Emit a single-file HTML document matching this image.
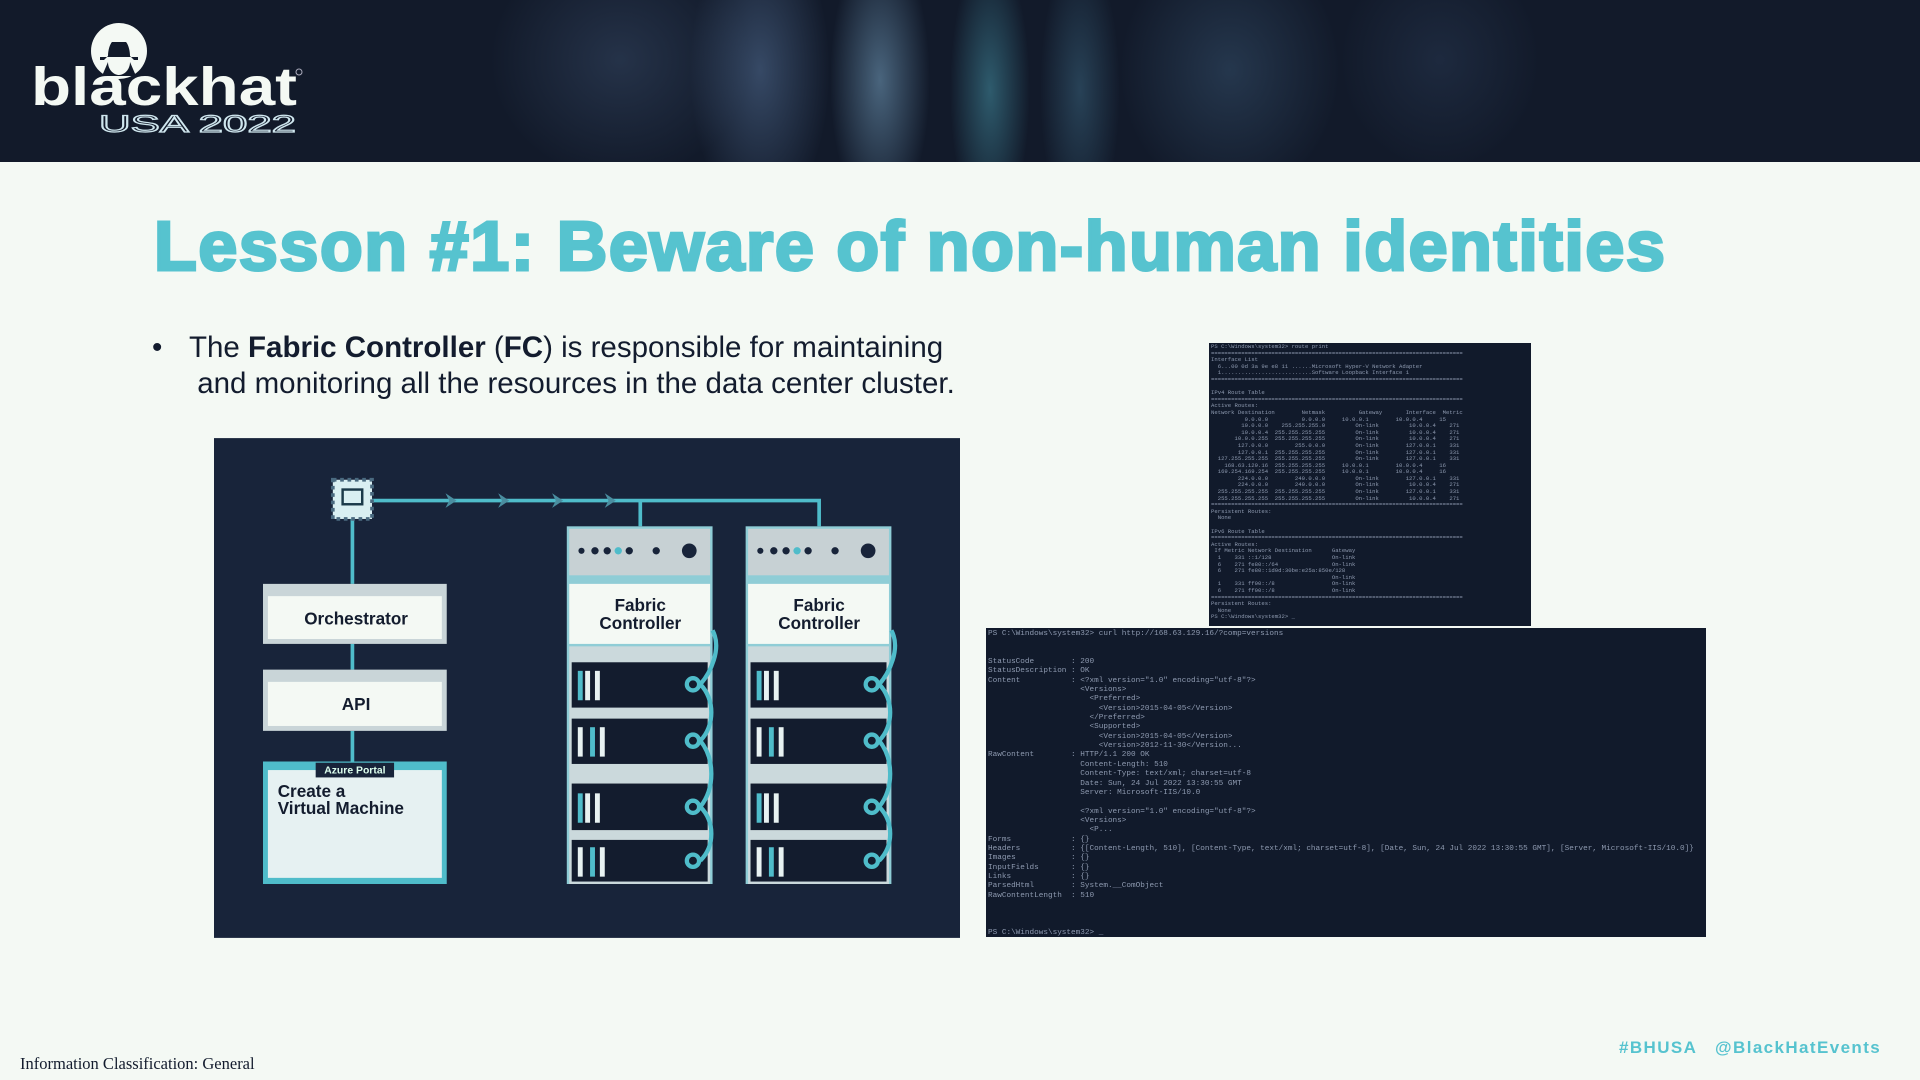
<!DOCTYPE html>
<html><head><meta charset="utf-8"><style>
*{margin:0;padding:0;box-sizing:border-box}
body{width:1920px;height:1080px;background:#f4f9f4;position:relative;overflow:hidden;font-family:"Liberation Sans",sans-serif}
.hdr{position:absolute;left:0;top:0;width:1920px;height:162px;background:
radial-gradient(ellipse 50px 140px at 880px 80px,rgba(110,150,180,.6),transparent),
radial-gradient(ellipse 70px 150px at 760px 70px,rgba(90,120,160,.5),transparent),
radial-gradient(ellipse 40px 140px at 990px 90px,rgba(80,170,190,.45),transparent),
radial-gradient(ellipse 40px 140px at 1080px 90px,rgba(80,140,170,.35),transparent),
radial-gradient(ellipse 110px 130px at 1230px 70px,rgba(60,90,120,.45),transparent),
radial-gradient(ellipse 130px 120px at 620px 60px,rgba(60,80,110,.45),transparent),
radial-gradient(ellipse 100px 110px at 1440px 60px,rgba(50,70,100,.35),transparent),
#121a2a}
.t{position:absolute;white-space:nowrap}
.term{position:absolute;background:#111a2b;font-family:"Liberation Mono",monospace;color:#8e9ab0;white-space:pre;overflow:hidden}
</style></head><body>
<div class="hdr"></div>
<svg style="position:absolute;left:0;top:0" width="400" height="162">
<circle cx="119" cy="51" r="28" fill="#f4f9f4"/>
<path d="M104 60 h30 l-4 -4 c0-6 -2-12 -4-14 h-14 c-2 2 -4 8 -4 14 z M100 57 h38 v3 h-38z M108 62 c0 8 6 13 11 13 s11-5 11-13 l6 14 h-34z" fill="#121a2a"/>
<text x="31" y="105" font-family="Liberation Sans" font-weight="bold" font-size="54" fill="#f4f9f4" textLength="266" lengthAdjust="spacingAndGlyphs">blackhat</text>
<text x="99" y="132" font-family="Liberation Sans" font-size="24" fill="none" stroke="#cfe6ee" stroke-width="1.2" textLength="197" lengthAdjust="spacingAndGlyphs">USA 2022</text>
<circle cx="299" cy="72" r="3" fill="none" stroke="#aab" stroke-width="1"/>
</svg>
<div class="t" style="left:154px;top:206px;font-size:70px;font-weight:bold;color:#56c3cf;letter-spacing:1.6px;-webkit-text-stroke:3px #56c3cf;line-height:80px">Lesson #1: Beware of non-human identities</div>
<div class="t" style="left:152px;top:330px;font-size:29.5px;color:#131c2e;line-height:36px">•</div>
<div class="t" style="left:189px;top:330px;font-size:29.5px;color:#131c2e;line-height:36px">The <b>Fabric Controller</b> (<b>FC</b>) is responsible for maintaining<br>&nbsp;and monitoring all the resources in the data center cluster.</div>

<svg style="position:absolute;left:214px;top:438px" width="746" height="500" viewBox="175 358 609 408">
<rect x="175" y="358" width="609" height="408" fill="#18243a"/>
<g stroke="#4fbcca" stroke-width="3" fill="none">
<path d="M304 409 H669 V430 M523 409 V430 M288 424 V477 M288 526 V547 M288 597 V622"/>
</g>
<g fill="#4a8ea0"><path d="M364 403 l9 6 -9 6 3-6z M407 403 l9 6 -9 6 3-6z M451 403 l9 6 -9 6 3-6z M494 403 l9 6 -9 6 3-6z"/></g>
<rect x="272" y="392" width="32" height="32" fill="#d9eff2" stroke="#4a6a80" stroke-width="3" stroke-dasharray="3 3"/>
<rect x="280" y="400" width="16" height="12" fill="none" stroke="#1b3a4a" stroke-width="2"/>
<rect x="215" y="477" width="150" height="49" fill="#c9d5d8"/><rect x="219" y="487" width="142" height="35" fill="#f4f9f4"/>
<text x="291" y="510" text-anchor="middle" font-family="Liberation Sans" font-weight="bold" font-size="14" fill="#131c2e">Orchestrator</text>
<rect x="215" y="547" width="150" height="50" fill="#c9d5d8"/><rect x="219" y="557" width="142" height="36" fill="#f4f9f4"/>
<text x="291" y="580" text-anchor="middle" font-family="Liberation Sans" font-weight="bold" font-size="14" fill="#131c2e">API</text>
<rect x="215" y="622" width="150" height="100" fill="#4fbcca"/><rect x="219" y="629" width="142" height="88" fill="#e6f1f2"/>
<rect x="258" y="623" width="64" height="12" fill="#18243a"/>
<text x="290" y="632" text-anchor="middle" font-family="Liberation Sans" font-weight="bold" font-size="8.5" fill="#dfe">Azure Portal</text>
<text x="227" y="651" font-family="Liberation Sans" font-weight="bold" font-size="14" fill="#131c2e">Create a</text>
<text x="227" y="665" font-family="Liberation Sans" font-weight="bold" font-size="14" fill="#131c2e">Virtual Machine</text>
<g id="fc">
<rect x="463" y="430" width="119" height="292" fill="#8fcdd6"/>
<rect x="465" y="432" width="115" height="38" fill="#c7d1d4"/>
<g fill="#18243a"><circle cx="475" cy="450" r="2.5"/><circle cx="486" cy="450" r="3"/><circle cx="496" cy="450" r="3"/><circle cx="514" cy="450" r="3"/><circle cx="536" cy="450" r="3"/><circle cx="563" cy="450" r="6"/></g>
<circle cx="505" cy="450" r="3" fill="#4fbcca"/>
<rect x="465" y="477" width="115" height="49" fill="#f4f9f4"/>
<text x="523" y="499" text-anchor="middle" font-family="Liberation Sans" font-weight="bold" font-size="14" fill="#131c2e">Fabric</text>
<text x="523" y="514" text-anchor="middle" font-family="Liberation Sans" font-weight="bold" font-size="14" fill="#131c2e">Controller</text>
<rect x="465" y="528" width="115" height="194" fill="#cbd9dc"/>
<g fill="#131c2e"><rect x="467" y="541" width="111" height="37"/><rect x="467" y="587" width="111" height="37"/><rect x="467" y="640" width="111" height="38"/><rect x="467" y="686" width="111" height="34"/></g>
<g fill="#e8f2f2"><rect x="478" y="548" width="4" height="24"/><rect x="486" y="548" width="4" height="24"/><rect x="472" y="594" width="4" height="24"/><rect x="490" y="594" width="4" height="24"/><rect x="478" y="648" width="4" height="24"/><rect x="486" y="648" width="4" height="24"/><rect x="472" y="692" width="4" height="24"/><rect x="490" y="692" width="4" height="24"/></g>
<g fill="#4fbcca"><rect x="472" y="548" width="4" height="24"/><rect x="482" y="594" width="4" height="24"/><rect x="472" y="648" width="4" height="24"/><rect x="482" y="692" width="4" height="24"/></g>
<g fill="none" stroke="#4fbcca" stroke-width="3.5"><circle cx="566" cy="559" r="5"/><circle cx="566" cy="605" r="5"/><circle cx="566" cy="659" r="5"/><circle cx="566" cy="703" r="5"/>
<path d="M582 515 c8 15 -2 35 -10 44 c12 12 12 34 0 46 c12 15 12 39 0 54 c12 12 12 32 0 44"/></g>
</g>
<use href="#fc" x="146"/>
</svg>

<div class="term" style="left:1209px;top:343px;width:322px;height:283px;font-size:5.6px;line-height:6.6px;padding:1px 2px">PS C:\Windows\system32> route print
===========================================================================
Interface List
  6...00 0d 3a 9e e8 11 ......Microsoft Hyper-V Network Adapter
  1...........................Software Loopback Interface 1
===========================================================================

IPv4 Route Table
===========================================================================
Active Routes:
Network Destination        Netmask          Gateway       Interface  Metric
          0.0.0.0          0.0.0.0     10.0.0.1        10.0.0.4     15
         10.0.0.0    255.255.255.0         On-link         10.0.0.4    271
         10.0.0.4  255.255.255.255         On-link         10.0.0.4    271
       10.0.0.255  255.255.255.255         On-link         10.0.0.4    271
        127.0.0.0        255.0.0.0         On-link        127.0.0.1    331
        127.0.0.1  255.255.255.255         On-link        127.0.0.1    331
  127.255.255.255  255.255.255.255         On-link        127.0.0.1    331
    168.63.129.16  255.255.255.255     10.0.0.1        10.0.0.4     16
  169.254.169.254  255.255.255.255     10.0.0.1        10.0.0.4     16
        224.0.0.0        240.0.0.0         On-link        127.0.0.1    331
        224.0.0.0        240.0.0.0         On-link         10.0.0.4    271
  255.255.255.255  255.255.255.255         On-link        127.0.0.1    331
  255.255.255.255  255.255.255.255         On-link         10.0.0.4    271
===========================================================================
Persistent Routes:
  None

IPv6 Route Table
===========================================================================
Active Routes:
 If Metric Network Destination      Gateway
  1    331 ::1/128                  On-link
  6    271 fe80::/64                On-link
  6    271 fe80::1d0d:30be:e25a:850e/128
                                    On-link
  1    331 ff00::/8                 On-link
  6    271 ff00::/8                 On-link
===========================================================================
Persistent Routes:
  None
PS C:\Windows\system32> _</div>

<div class="term" style="left:986px;top:628px;width:720px;height:309px;font-size:7.7px;line-height:9.35px;padding:2px 2px">PS C:\Windows\system32> curl http://168.63.129.16/?comp=versions


StatusCode        : 200
StatusDescription : OK
Content           : &lt;?xml version="1.0" encoding="utf-8"?&gt;
                    &lt;Versions&gt;
                      &lt;Preferred&gt;
                        &lt;Version&gt;2015-04-05&lt;/Version&gt;
                      &lt;/Preferred&gt;
                      &lt;Supported&gt;
                        &lt;Version&gt;2015-04-05&lt;/Version&gt;
                        &lt;Version&gt;2012-11-30&lt;/Version...
RawContent        : HTTP/1.1 200 OK
                    Content-Length: 510
                    Content-Type: text/xml; charset=utf-8
                    Date: Sun, 24 Jul 2022 13:30:55 GMT
                    Server: Microsoft-IIS/10.0

                    &lt;?xml version="1.0" encoding="utf-8"?&gt;
                    &lt;Versions&gt;
                      &lt;P...
Forms             : {}
Headers           : {[Content-Length, 510], [Content-Type, text/xml; charset=utf-8], [Date, Sun, 24 Jul 2022 13:30:55 GMT], [Server, Microsoft-IIS/10.0]}
Images            : {}
InputFields       : {}
Links             : {}
ParsedHtml        : System.__ComObject
RawContentLength  : 510



PS C:\Windows\system32> _</div>

<div class="t" style="left:20px;top:1054px;font-family:'Liberation Serif',serif;font-size:16.5px;color:#131c2e">Information Classification: General</div>
<div class="t" style="left:1619px;top:1038px;font-size:17px;font-weight:bold;color:#56c3cf;letter-spacing:1.4px">#BHUSA &nbsp;&nbsp;@BlackHatEvents</div>
</body></html>
